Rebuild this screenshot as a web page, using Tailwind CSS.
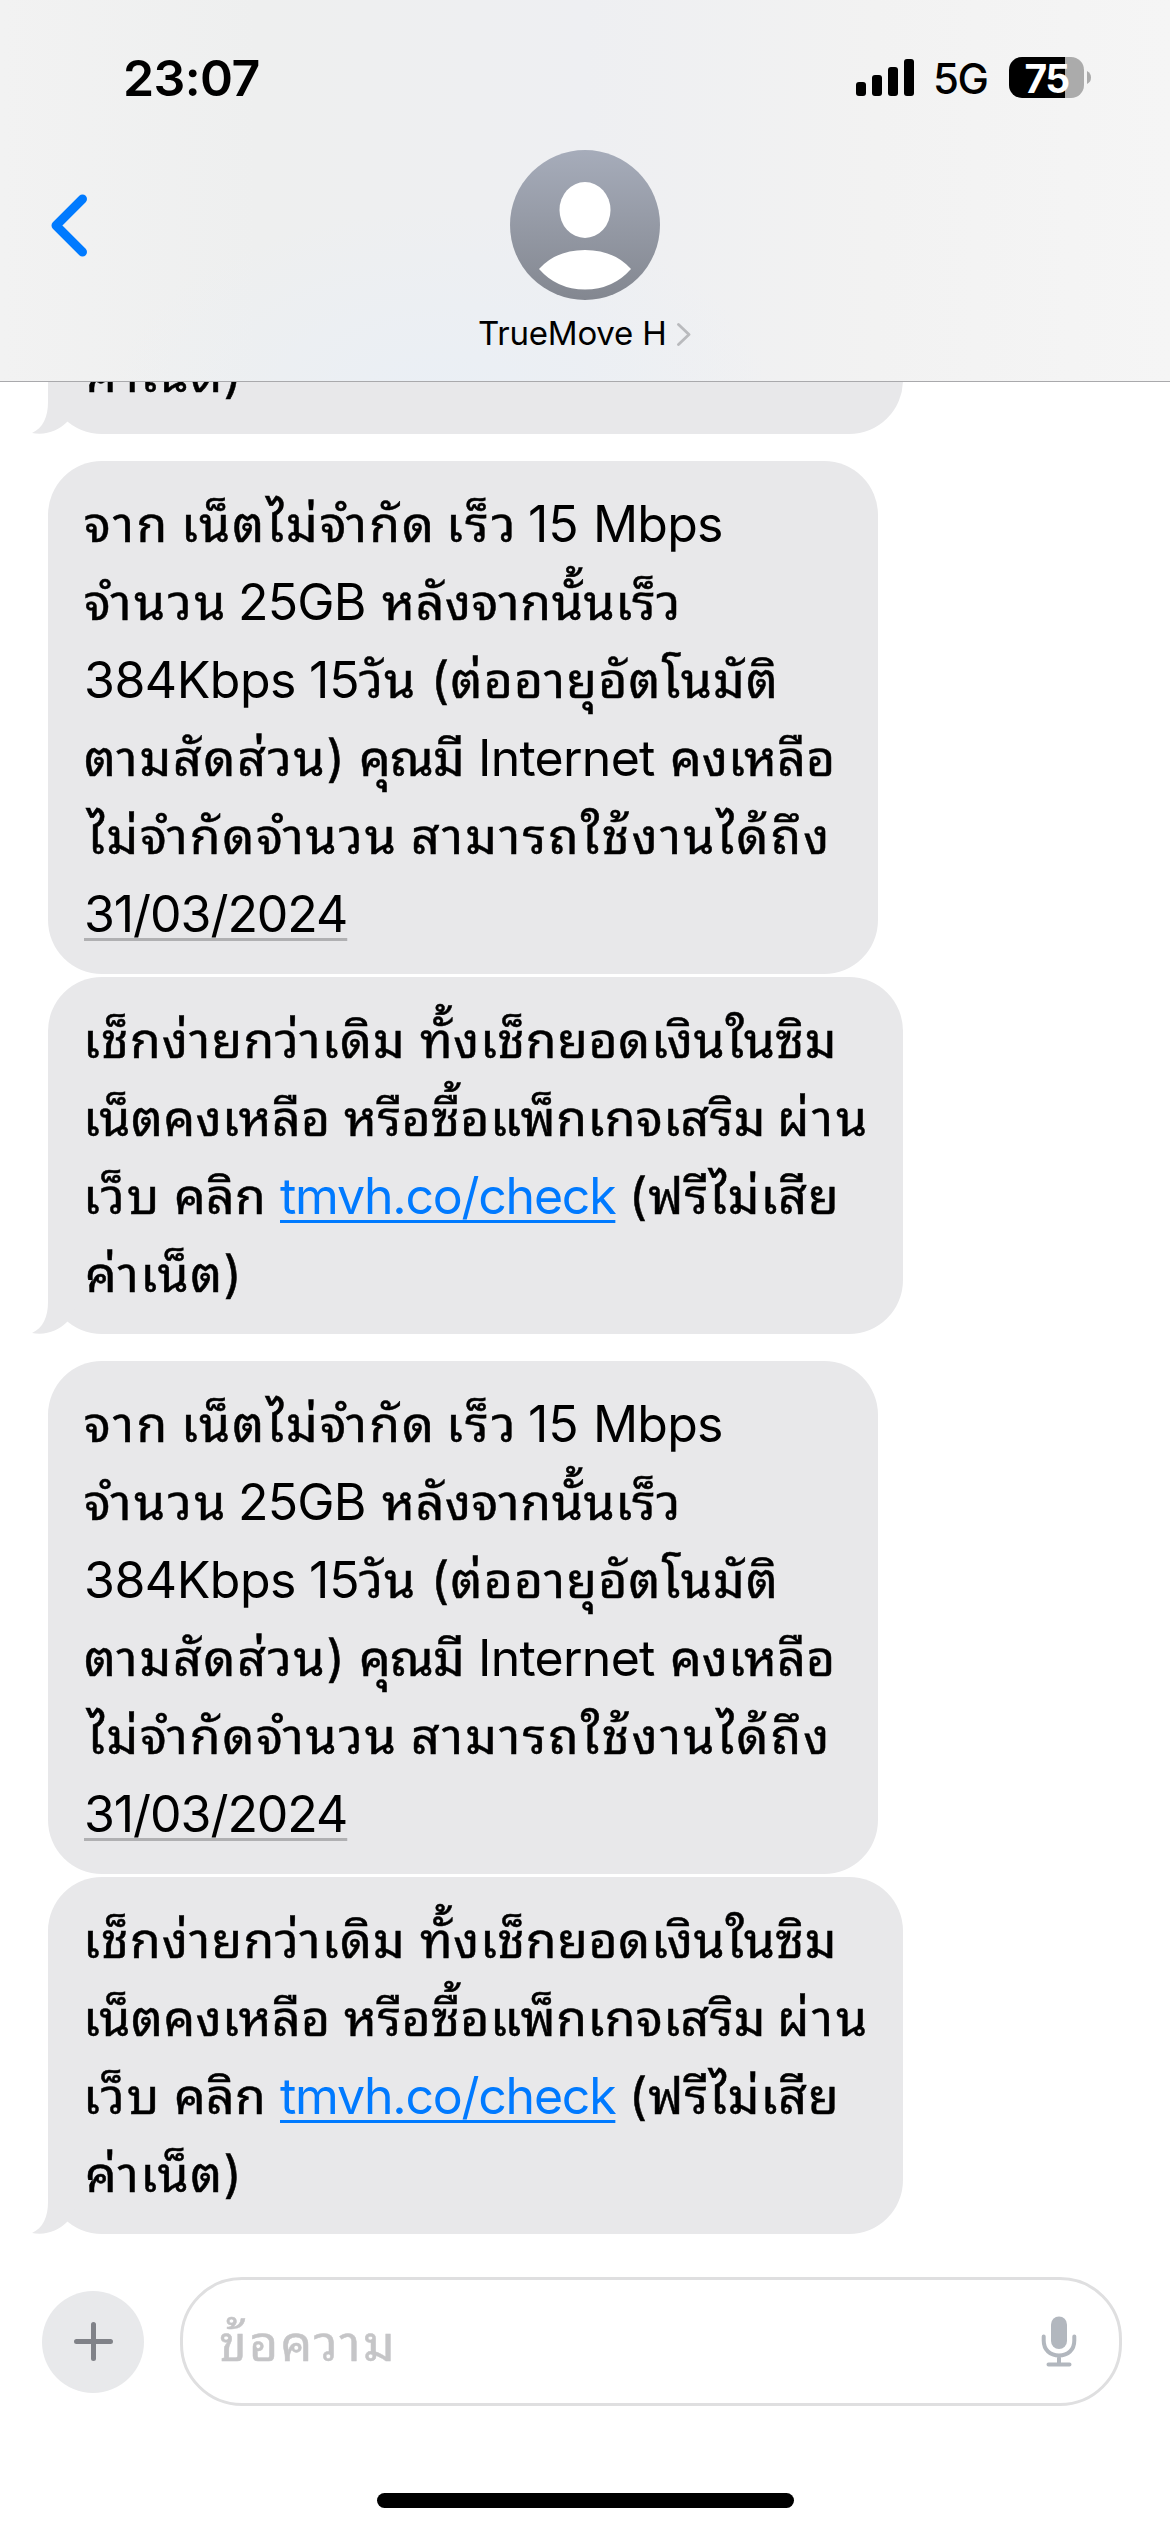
<!DOCTYPE html>
<html lang="th">
<head>
<meta charset="utf-8">
<title>TrueMove H</title>
<script src="https://cdn.jsdelivr.net/npm/@tailwindcss/browser@4"></script>
</head>
<body class="bg-white">
<div class="flex h-[2532px] w-[1170px] flex-col overflow-hidden bg-white font-['Inter','Noto_Sans_Thai_Looped','Noto_Sans_Thai',sans-serif] text-black">

  <!-- Header -->
  <header class="h-[382px] shrink-0 border-b border-[#a9a9ac] bg-[radial-gradient(ellipse_330px_190px_at_440px_400px,#eaeff5_0%,#eaeff500_100%),linear-gradient(90deg,#f2f2f2_0%,#eeefef_22%,#eeeff2_50%,#f2f2f2_75%,#f5f5f5_100%)]">
    <div class="flex h-[150px] items-start">
      <div class="ml-[123px] mt-[48px] w-[733px] text-[50px] leading-[60px] font-semibold tracking-[-0.6px]">23:07</div>
      <svg class="mt-[59px] h-[37px] w-[58px]" viewBox="0 0 58 37">
        <rect x="0" y="23" width="10" height="14" rx="3"/>
        <rect x="16" y="16" width="10" height="21" rx="3"/>
        <rect x="32" y="8" width="10" height="29" rx="3"/>
        <rect x="48" y="0" width="10" height="37" rx="3"/>
      </svg>
      <div class="ml-[19px] mt-[54px] w-[76px] text-[42px] leading-[50px] font-medium tracking-[-1.5px]">5G</div>
      <div class="mt-[57px] flex h-[41px] w-[75px] items-center justify-center rounded-[13px] bg-[linear-gradient(90deg,#000_56px,#ababab_56px)] pt-px text-[39px] leading-[41px] font-bold tracking-[-1.5px] text-white">75</div>
      <svg class="ml-[3px] mt-[71px] h-[13px] w-[4px]" viewBox="0 0 4 13"><path d="M0 0Q4 2 4 6.500T0 13Z" fill="#ababab"/></svg>
    </div>
    <div class="flex">
      <svg class="mt-[43px] ml-[50px] h-[65px] w-[38px]" viewBox="0 0 38 65" fill="none" stroke="#007aff" stroke-width="9" stroke-linecap="round" stroke-linejoin="round"><path d="M32.500 6L6 32.500L32.500 59"/></svg>
      <div class="ml-[390px] flex w-[214px] flex-col">
        <svg class="ml-[32px] size-[150px]" viewBox="0 0 150 150">
          <defs><linearGradient id="avatar" x1="0" y1="0" x2="0" y2="1"><stop offset="0" stop-color="#a6acba"/><stop offset="1" stop-color="#838790"/></linearGradient></defs>
          <circle cx="75" cy="75" r="75" fill="url(#avatar)"/>
          <ellipse cx="75" cy="60" rx="25.500" ry="28" fill="#fff"/>
          <path d="M29 119Q46 100 75 100T121 119Q103 139.500 75 139.500T29 119Z" fill="#fff"/>
        </svg>
        <div class="mt-[13px] flex items-center">
          <span class="w-[199px] text-[33px] leading-[40px] tracking-[-0.2px] whitespace-nowrap">TrueMove H</span>
          <svg class="mt-[3px] h-[23px] w-[14px]" viewBox="0 0 14 23" fill="none" stroke="#b9babd" stroke-width="2.800" stroke-linecap="round" stroke-linejoin="round"><path d="M1.500 1.500L12 11.500L1.500 21.500"/></svg>
        </div>
      </div>
    </div>
  </header>

  <!-- Conversation -->
  <main id="list" class="flex h-[1852px] shrink-0 flex-col items-start justify-end overflow-hidden pl-[48px] text-[50px] leading-[78px] whitespace-nowrap [-webkit-text-stroke:0.5px]">
    <div class="relative w-[855px] shrink-0 rounded-[54px] bg-[#e8e8ea] pt-[24px] pb-[21px] pl-[35px]">
      <div class="ml-[2px] tracking-[1.46px]">ค่าเน็ต)</div>
      <svg class="absolute bottom-0 -left-[16px] h-[60px] w-[60px]" viewBox="0 0 60 60"><path d="M16 6V28C16 43 11 54 0 59C14 61.500 26 57 35.500 47.500L60 6Z" fill="#e8e8ea"/></svg>
    </div>
    <div class="thread contents"></div>
    <div class="thread contents"></div>
  </main>

  <!-- Composer -->
  <footer class="flex h-[298px] flex-col items-center">
    <div class="flex w-full items-center pt-[43px] pl-[42px]">
      <div class="flex size-[102px] items-center justify-center rounded-full bg-[#e8e9eb]">
        <svg class="size-[39px]" viewBox="0 0 39 39" fill="none" stroke="#808288" stroke-width="5" stroke-linecap="round"><path d="M19.500 2.500V36.500M2.500 19.500H36.500"/></svg>
      </div>
      <div class="ml-[36px] flex h-[129px] w-[942px] items-center justify-between rounded-[62px] border-[3px] border-[#dfdfe0] pr-[42px] pl-[36px]">
        <span class="mt-[3px] text-[50px] leading-[78px] tracking-[2.24px] text-[#c5c5c7] [-webkit-text-stroke:0.5px]">ข้อความ</span>
        <svg class="h-[51px] w-[36px]" viewBox="0 0 36 51" fill="none" stroke="#b2b7be" stroke-width="4" stroke-linecap="round">
          <rect x="10" y="0.500" width="16" height="32.500" rx="8" fill="#b2b7be" stroke="none"/>
          <path d="M2.700 20.500V24.500C2.700 34 9 39.500 18 39.500S33.300 34 33.300 24.500V20.500M18 40V48M7.500 48.500H28.500"/>
        </svg>
      </div>
    </div>
    <div class="mt-[87px] h-[15px] w-[417px] rounded-full bg-black"></div>
  </footer>
</div>

<!-- One quota notice followed by the self-service hint -->
<template id="pair">
  <div class="mt-[27px] w-[830px] shrink-0 rounded-[54px] bg-[#e8e8ea] pt-[24px] pb-[21px] pl-[36px]">
    <div class="flex"><span class="w-[97px] tracking-[2.5px]">จาก </span><span class="w-[265px] tracking-[2.05px]">เน็ตไม่จำกัด </span><span class="w-[82px] tracking-[2.9px]">เร็ว </span><span class="w-[65px] [-webkit-text-stroke:0]">15 </span><span class="tracking-[-0.8px] [-webkit-text-stroke:0]">Mbps</span></div>
    <div class="flex"><span class="w-[154px] tracking-[2.55px]">จำนวน </span><span class="w-[144px] tracking-[-0.8px] [-webkit-text-stroke:0]">25GB </span><span class="tracking-[0.63px]">หลังจากนั้นเร็ว</span></div>
    <div class="flex"><span class="w-[225px] tracking-[-0.49px] [-webkit-text-stroke:0]">384Kbps </span><span class="w-[50px] [-webkit-text-stroke:0]">15</span><span class="w-[72px] tracking-[1px]">วัน </span><span class="tracking-[1.23px]">(ต่ออายุอัตโนมัติ</span></div>
    <div class="flex"><span class="w-[275px] tracking-[1.78px]">ตามสัดส่วน) </span><span class="w-[119px] tracking-[-0.9px]">คุณมี </span><span class="w-[192px] tracking-[-0.75px] [-webkit-text-stroke:0]">Internet </span><span class="tracking-[0.16px]">คงเหลือ</span></div>
    <div class="flex pl-[3px]"><span class="w-[324px] tracking-[1.92px]">ไม่จำกัดจำนวน </span><span class="tracking-[2.22px]">สามารถใช้งานได้ถึง</span></div>
    <div class="tracking-[-1.05px] [-webkit-text-stroke:0]"><span class="underline decoration-[#b0b0b2] decoration-[3px] underline-offset-[6px]">31/03/2024</span></div>
  </div>
  <div class="relative mt-[3px] w-[855px] shrink-0 rounded-[54px] bg-[#e8e8ea] pt-[24px] pb-[21px] pl-[35px]">
    <div class="flex"><span class="w-[337px] tracking-[1.23px]">เช็กง่ายกว่าเดิม </span><span class="tracking-[0.63px]">ทั้งเช็กยอดเงินในซิม</span></div>
    <div class="flex"><span class="w-[261px] tracking-[0.48px]">เน็ตคงเหลือ </span><span class="w-[433px] tracking-[0.46px]">หรือซื้อแพ็กเกจเสริม </span><span class="tracking-[2.8px]">ผ่าน</span></div>
    <div class="flex"><span class="w-[91px] tracking-[2.15px]">เว็บ </span><span class="w-[106px] tracking-[0.27px]">คลิก </span><span class="w-[349px] tracking-[-1.25px] text-[#007aff] [-webkit-text-stroke:0]"><a class="underline decoration-[3px] underline-offset-[6px]">tmvh.co/check</a> </span><span class="tracking-[1.02px]">(ฟรีไม่เสีย</span></div>
    <div class="ml-[2px] tracking-[1.46px]">ค่าเน็ต)</div>
    <svg class="absolute bottom-0 -left-[16px] h-[60px] w-[60px]" viewBox="0 0 60 60"><path d="M16 6V28C16 43 11 54 0 59C14 61.500 26 57 35.500 47.500L60 6Z" fill="#e8e8ea"/></svg>
  </div>
</template>
<script>
  const pair = document.getElementById('pair');
  document.querySelectorAll('.thread').forEach(t => t.append(pair.content.cloneNode(true)));
</script>
</body>
</html>
